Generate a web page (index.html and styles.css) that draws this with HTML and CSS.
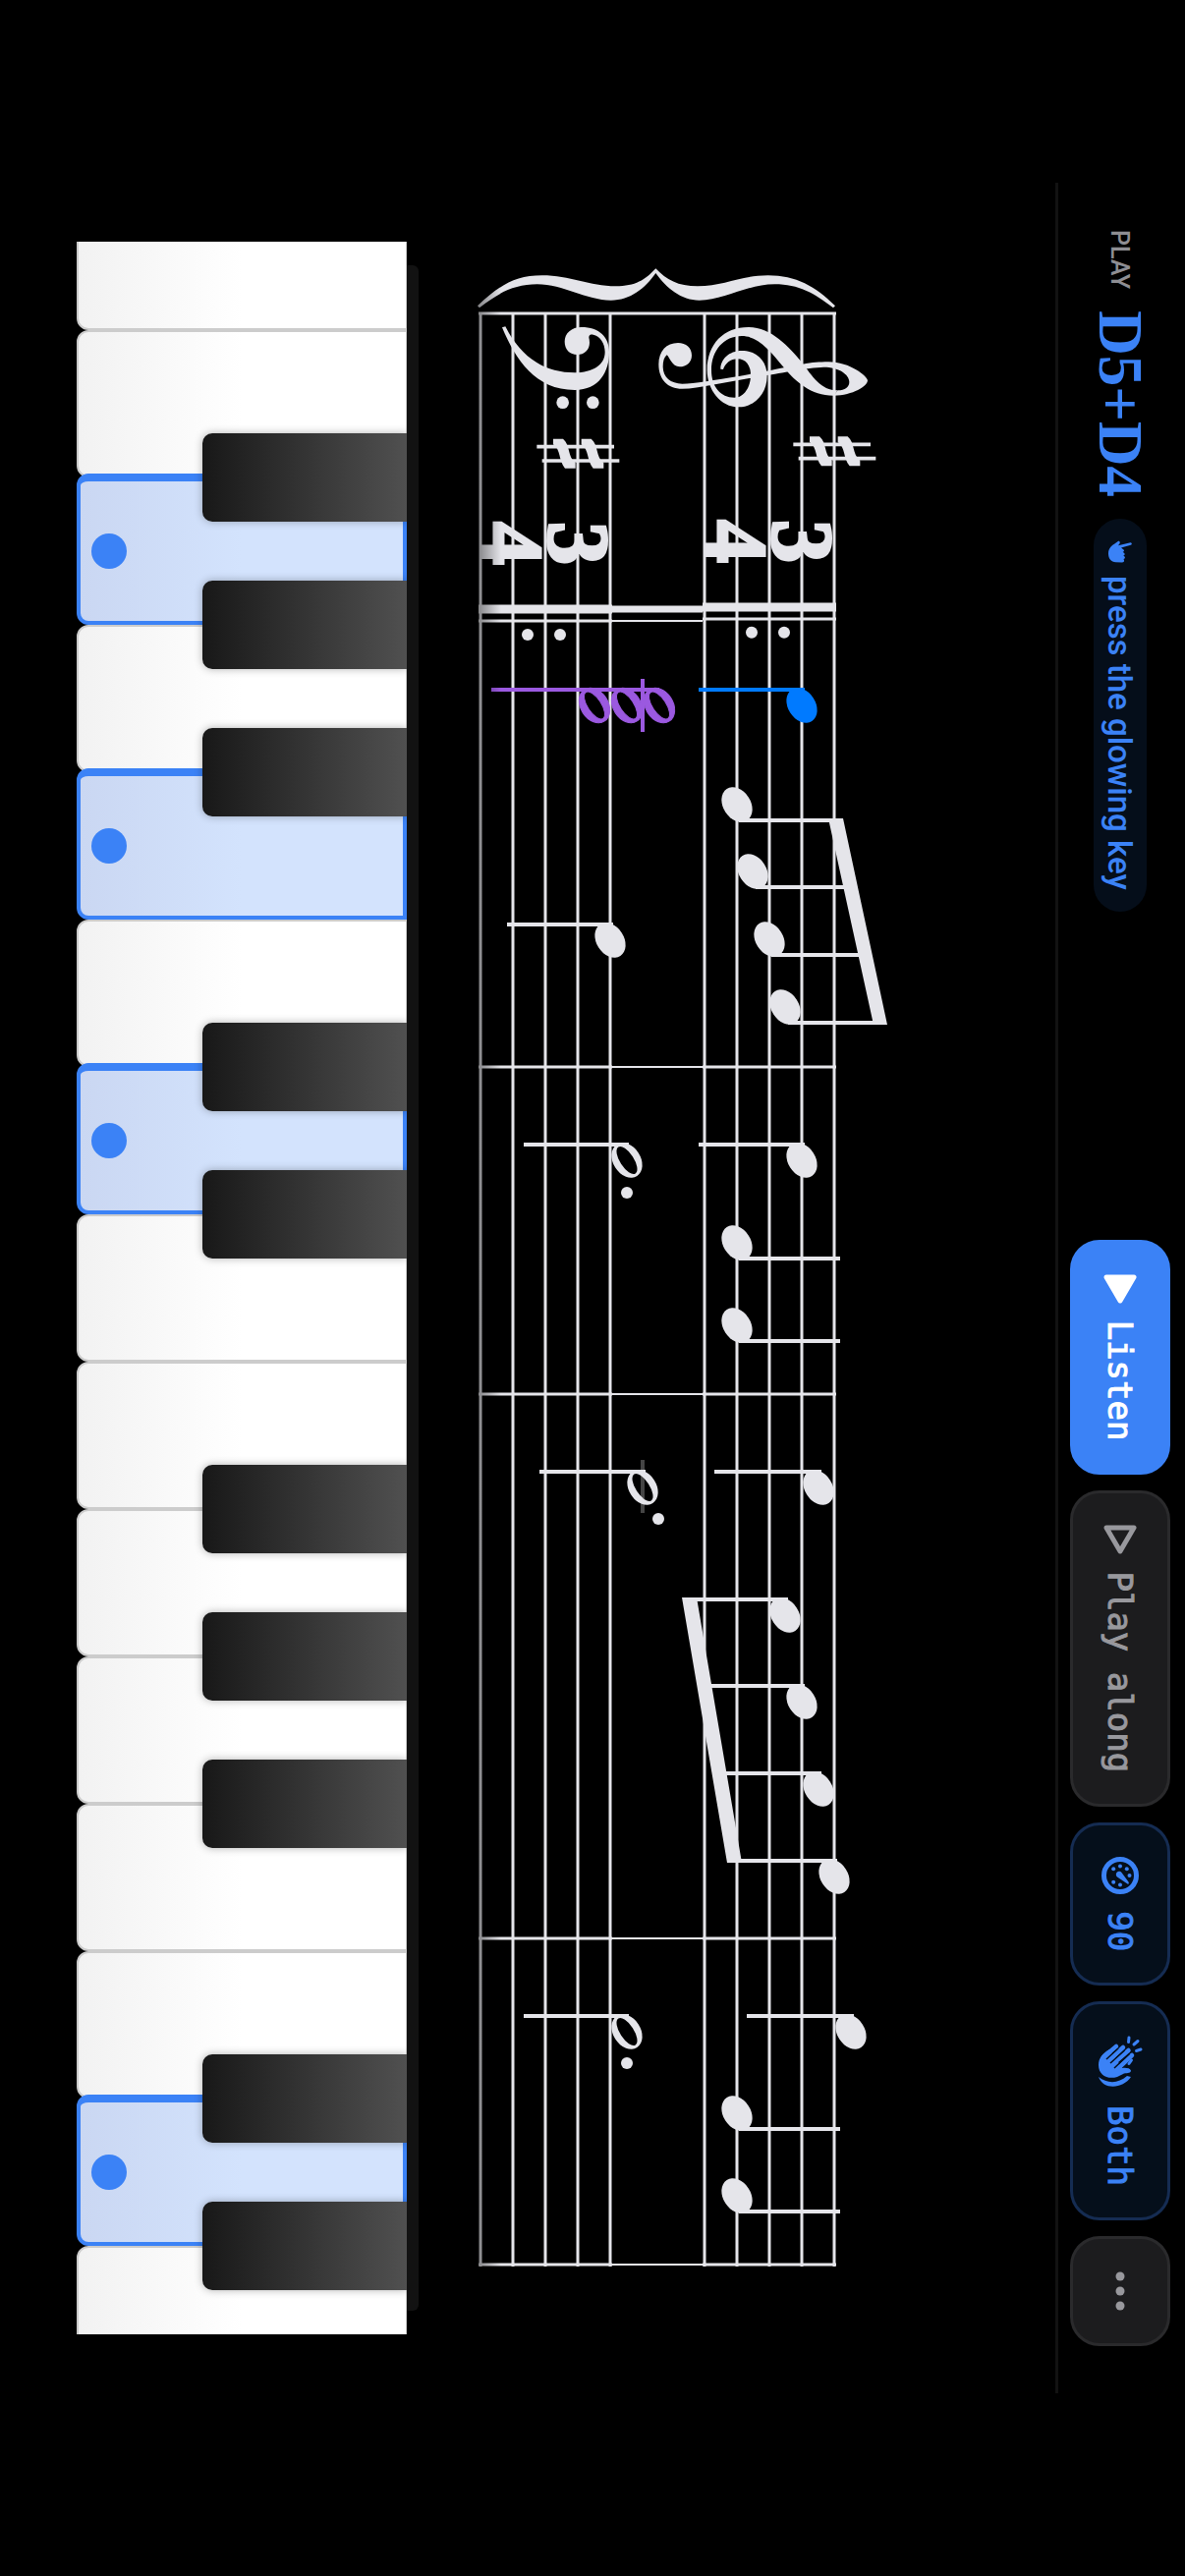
FILE: index.html
```html
<!DOCTYPE html>
<html lang="en">
<head>
<meta charset="utf-8">
<meta name="viewport" content="width=device-width, initial-scale=1">
<title>Piano practice</title>
<link rel="stylesheet" href="styles.css">
</head>
<body>
<main class="stage">
  <header class="toolbar">
    <div class="prompt">
      <span class="prompt-label">PLAY</span>
      <strong class="prompt-notes">D5+D4</strong>
      <span class="hint">
        <svg class="icon-hand" viewBox="0 0 24 24" aria-hidden="true"><path d="M2.200 1.500C2.500-.2 4.300-.3 4.700 1.200L7.500 11L9.500 8.500C10.400 7.600 11.700 8 11.800 9.300L13.200 7.600C14.200 7 15.300 7.500 15.300 8.800L16.800 7.300C17.800 6.700 18.900 7.300 18.900 8.500L20.300 8C21.600 7.700 22.400 8.600 22.400 10L22.300 16.500C22 21 18.500 24 13.500 24C9 24 6 21.500 3.800 18L1 14.200C.4 13 1.800 11.600 3.200 12.500L5.300 14Z"/></svg>
        <span>press the glowing key</span>
      </span>
    </div>
    <div class="actions">
      <button class="btn btn-primary" type="button">
        <svg class="icon-play" viewBox="0 0 30 34" aria-hidden="true"><path d="M3 3V31L27 17Z" fill="currentColor" stroke="currentColor" stroke-width="5" stroke-linejoin="round"/></svg>
        <span>Listen</span>
      </button>
      <button class="btn btn-muted" type="button">
        <svg class="icon-play" viewBox="0 0 30 34" aria-hidden="true"><path d="M3 3V31L27 17Z" fill="none" stroke="currentColor" stroke-width="5" stroke-linejoin="round"/></svg>
        <span>Play along</span>
      </button>
      <button class="btn btn-tint" type="button">
        <svg class="icon-gauge" viewBox="0 0 38 38" aria-hidden="true"><circle cx="19" cy="19" r="16.500" fill="none" stroke="currentColor" stroke-width="5"/><g fill="currentColor"><circle cx="19" cy="9.500" r="2"/><circle cx="12.200" cy="12.200" r="2"/><circle cx="9.500" cy="19" r="2"/><circle cx="12.200" cy="25.800" r="2"/><circle cx="25.800" cy="25.800" r="2"/><circle cx="28.500" cy="19" r="2"/><path d="M27.500 11.500L20.500 22A3.200 3.200 0 1 1 16 17.500L25.500 10.500C27 9.800 28.300 10.400 27.500 11.500Z"/></g></svg>
        <span>90</span>
      </button>
      <button class="btn btn-tint" type="button">
        <svg class="icon-clap" viewBox="0 0 54 46" aria-hidden="true"><g fill="none" stroke="currentColor" stroke-linecap="round"><path d="M2 14L6.500 14.500M5.500 5L9 9M14 2L15.500 6.500" stroke-width="3"/><path d="M11 27L22 40M12 20L27 36M15 14.500L31 33M20 11L36 28" stroke-width="4.500"/><path d="M25 11.500L28.500 14" stroke-width="3"/></g><path d="M14 34L22 28L33 21C32.500 17 33 13 35.500 12C38 12 38 15 38.500 19L42 26C45 36 40 45 30 45C23 45 18 41 14 34Z" fill="currentColor"/><path d="M42 12C54 20 56 40 42 45C49 36 49 25 41 16Z" fill="currentColor"/><path d="M13 25L24 37M15 18.500L28 33M18.500 13.500L33 29" stroke="#050f1b" stroke-width="1.500" fill="none"/></svg>
        <span>Both</span>
      </button>
      <button class="btn btn-muted" type="button" aria-label="More">
        <svg class="icon-more" viewBox="0 0 42 12" aria-hidden="true"><g fill="currentColor"><circle cx="6" cy="6" r="4.500"/><circle cx="21" cy="6" r="4.500"/><circle cx="36" cy="6" r="4.500"/></g></svg>
      </button>
    </div>
  </header>

  <section class="score" aria-label="Score">
    <svg class="score-sheet" viewBox="186 132 2250 648" role="img" aria-label="Piano score, three-four time">
      <defs>
        <ellipse id="solid" rx="19" ry="14" transform="rotate(-33)"/>
        <path id="hollow" fill-rule="evenodd" transform="rotate(-33)" d="M-19 0A19 14 0 1 1 19 0A19 14 0 1 1 -19 0ZM-16 0A16 7 0 1 0 16 0A16 7 0 1 0 -16 0Z"/>
        <g id="sharp">
          <path d="M1042 607H1278M1058 650H1294" stroke="#e5e5ea" stroke-width="11"/>
          <path id="sharp-bar" d="M1092 583H1122C1146 604 1134 636 1160 656V673H1128C1108 650 1116 616 1092 600Z"/>
          <use href="#sharp-bar" x="86"/>
        </g>
        <linearGradient id="fade" x1="0" y1="696" x2="0" y2="722" gradientUnits="userSpaceOnUse">
          <stop offset="0" stop-color="#fff"/><stop offset="1" stop-color="#888"/>
        </linearGradient>
        <mask id="edge" maskUnits="userSpaceOnUse" x="186" y="132" width="2250" height="648"><rect x="186" y="132" width="2250" height="648" fill="url(#fade)"/></mask>
      </defs>
      <g mask="url(#edge)" fill="#e5e5ea">
        <path class="line" d="M318 357H2307M318 390H2307M318 423H2307M318 456H2307M318 489H2307M318 585H2307M318 618H2307M318 651H2307M318 684H2307M318 717H2307"/>
        <path class="line" d="M319 355V719M1086 355V491M1086 583V719M1419 355V491M1419 583V719M1973 355V491M1973 583V719M2305 355V491M2305 583V719M630 355V491M632 583V719"/>
        <path class="thin" d="M1086 491V583M1419 491V583M1973 491V583M2305 491V583M632 491V583"/>
        <path class="bar" d="M618 355V491M620 583V719"/>
        <path class="bar-thin" d="M620 491V583"/>

        <g transform="matrix(0 -.33333 .33333 0 250 746)">
          <path d="M78 184C140 125 190 91 275 91C360 91 420 124 500 124C560 124 590 105 622 70C655 105 690 124 750 124C830 124 880 91 965 91C1050 91 1110 125 1170 184L1164 190C1105 145 1060 118 985 118C900 118 830 167 755 167C700 167 655 130 622 84C590 130 545 167 485 167C410 167 340 118 260 118C190 118 140 145 84 190Z"/>
          <path d="M153 250C195 350 255 441 375 441C450 441 480 385 480 325C480 280 450 249 395 249C365 249 344 268 344 293C344 317 360 333 382 333C405 333 420 317 420 296C420 285 418 283 418 279C419 272 425 271 431 272C452 276 467 298 467 325C467 365 430 388 375 388C290 388 215 350 163 247Z"/>
          <circle cx="338" cy="479" r="19"/><circle cx="430" cy="479" r="19"/>
          <path d="M820 377C820 348 845 321 885 321C930 321 962 352 962 398C962 450 925 493 875 493C820 493 779 440 779 380C779 300 830 249 905 249C975 249 1030 310 1068 356C1100 398 1125 442 1178 442L1165 458C1095 458 1050 415 1015 374C970 320 935 276 885 276C830 276 792 320 792 380C792 430 820 464 862 464C893 464 912 430 912 395C912 366 897 346 872 346C850 346 834 360 828 378Z"/>
          <path d="M1070 362C1100 357 1120 355 1150 355C1215 355 1269 400 1269 412C1269 428 1225 458 1165 458L1178 442C1200 442 1213 432 1213 416C1213 393 1180 371 1135 371C1085 373 1000 390 960 396L795 425C760 432 730 437 703 437C658 437 631 408 631 362C631 322 655 297 690 297C715 297 732 312 732 335C732 356 716 370 695 370C672 370 664 340 656 334C648 340 644 352 644 370C644 402 668 422 703 422C740 422 800 410 880 398C960 384 1020 370 1070 362Z"/>
          <use href="#sharp"/><use href="#sharp" x="-783" y="7"/>
          <circle cx="915" cy="1181" r="18"/><circle cx="1014" cy="1181" r="18"/>
          <circle cx="231" cy="1188" r="18"/><circle cx="330" cy="1188" r="18"/>
        </g>

        <g class="meter"><text x="551" y="419">3</text><text x="551" y="486">4</text><text x="553" y="647">3</text><text x="553" y="714">4</text></g>

        <path class="stem" d="M835 454V350M903 437V336M972 421V320M1041 404V306M1165 387V495M1281 454V351M1365 454V351M1498 370V479M1628 404V510M1716 387V490M1805 370V474M1894 354V464M2052 337V446M2167 454V351M2251 454V351"/>
        <path d="M833 348L1043 303V317L833 363ZM1626 497L1896 451V466L1626 512Z"/>
        <g>
          <use href="#solid" x="819" y="456"/><use href="#solid" x="887" y="440"/><use href="#solid" x="956" y="423"/><use href="#solid" x="1025" y="407"/>
          <use href="#solid" x="1181" y="390"/><use href="#solid" x="1265" y="456"/><use href="#solid" x="1349" y="456"/>
          <use href="#solid" x="1514" y="373"/><use href="#solid" x="1644" y="407"/><use href="#solid" x="1732" y="390"/><use href="#solid" x="1821" y="373"/><use href="#solid" x="1910" y="357"/>
          <use href="#solid" x="2068" y="340"/><use href="#solid" x="2151" y="456"/><use href="#solid" x="2235" y="456"/>
        </g>
        <path class="ledger" d="M1486 552H1540"/>
        <path class="stem" d="M941 582V690M1165 566V673M1498 549V657M2052 566V673"/>
        <use href="#solid" x="957" y="585"/>
        <use href="#hollow" x="1181" y="568"/><circle cx="1214" cy="568" r="6"/>
        <use href="#hollow" x="1514" y="552"/><circle cx="1546" cy="536" r="6"/>
        <use href="#hollow" x="2068" y="568"/><circle cx="2100" cy="568" r="6"/>

        <g class="now-right"><path d="M702 387V495"/><use href="#solid" x="718" y="390"/></g>
        <g class="now-left"><path d="M702 535V706M691 552H745"/><use href="#hollow" x="718" y="601"/><use href="#hollow" x="718" y="568"/><use href="#hollow" x="718" y="535"/></g>
      </g>
    </svg>
  </section>

  <section class="keyboard" aria-label="Keyboard">
    <div class="felt"></div>
    <div class="keybed">
      <div class="keys">
        <button class="key" type="button" aria-label="E3"></button>
        <button class="key" type="button" aria-label="F3"><span class="sharp"></span></button>
        <button class="key lit" type="button" aria-label="G3"><span class="sharp"></span></button>
        <button class="key" type="button" aria-label="A3"><span class="sharp"></span></button>
        <button class="key lit" type="button" aria-label="B3"></button>
        <button class="key" type="button" aria-label="C4"><span class="sharp"></span></button>
        <button class="key lit" type="button" aria-label="D4"><span class="sharp"></span></button>
        <button class="key" type="button" aria-label="E4"></button>
        <button class="key" type="button" aria-label="F4"><span class="sharp"></span></button>
        <button class="key" type="button" aria-label="G4"><span class="sharp"></span></button>
        <button class="key" type="button" aria-label="A4"><span class="sharp"></span></button>
        <button class="key" type="button" aria-label="B4"></button>
        <button class="key" type="button" aria-label="C5"><span class="sharp"></span></button>
        <button class="key lit" type="button" aria-label="D5"><span class="sharp"></span></button>
        <button class="key" type="button" aria-label="E5"></button>
      </div>
    </div>
  </section>
</main>
</body>
</html>
```
FILE: styles.css
```css
:root {
  --blue: #3b82f6;
  --ink: #e5e5ea;
}

* { box-sizing: border-box; }

html, body { height: 100%; }

body {
  margin: 0;
  overflow: hidden;
  background: #000;
  font-family: Roboto, "Liberation Sans", sans-serif;
}

/* The player is always laid out in landscape; a portrait window shows it turned. */
.stage {
  display: flex;
  flex-direction: column;
  width: 100vw;
  height: 100vh;
  padding: 0 186px 78px;
}

@media (orientation: portrait) {
  .stage {
    position: absolute;
    top: 0;
    left: 100%;
    width: 100vh;
    height: 100vw;
    transform: rotate(90deg);
    transform-origin: top left;
  }
}

.toolbar {
  display: flex;
  align-items: center;
  justify-content: space-between;
  padding: 15px 48px 12px;
  border-bottom: 3px solid #121212;
}

.prompt, .actions, .hint, .btn { display: flex; align-items: center; }

.prompt { gap: 22px; }

.prompt-label {
  color: #8e8e93;
  font-size: 25px;
  font-weight: 500;
}

.prompt-notes {
  color: var(--blue);
  font: bold 63px/64px "Liberation Serif", serif;
}

.hint {
  gap: 12px;
  height: 54px;
  padding: 0 22px;
  border-radius: 27px;
  background: #050e1a;
  color: var(--blue);
  font-size: 33px;
  font-weight: 500;
}

.icon-hand { width: 24px; height: 24px; fill: currentColor; }
.icon-play { width: 30px; height: 34px; }
.icon-gauge { width: 38px; height: 38px; }
.icon-clap { width: 54px; height: 46px; }
.icon-more { width: 42px; height: 12px; }

.actions { gap: 16px; }

.btn {
  gap: 17px;
  height: 102px;
  padding: 0 32px;
  border: 3px solid transparent;
  border-radius: 30px;
  font: 34px/40px "DejaVu Sans Mono", monospace;
  -webkit-text-stroke: 1px currentColor;
}

.btn-primary { border-color: var(--blue); background: var(--blue); color: #fff; }
.btn-muted { border-color: #2a2a2c; background: #1c1c1e; color: #98989d; }
.btn-tint { border-color: #152c52; background: #050f1b; color: var(--blue); }

.score { flex: 1; min-height: 0; }

.score-sheet { display: block; width: 100%; height: 100%; }
.line { fill: none; stroke: var(--ink); stroke-width: 3; }
.thin { fill: none; stroke: var(--ink); stroke-width: 2; }
.bar { fill: none; stroke: var(--ink); stroke-width: 9; }
.bar-thin { fill: none; stroke: var(--ink); stroke-width: 7; }
.stem { fill: none; stroke: var(--ink); stroke-width: 4; }
.ledger { stroke: #444; stroke-width: 4; }
.meter {
  font: bold 88px "Liberation Serif", serif;
  text-anchor: middle;
  stroke: var(--ink);
  stroke-width: 3;
}
.now-right { fill: #007aff; stroke: none; }
.now-right path { stroke: #007aff; stroke-width: 4; }
.now-left { fill: #9b59e0; }
.now-left path { stroke: #9b59e0; stroke-width: 4; }
.now-left use { stroke: #9b59e0; stroke-width: 1; }

.keyboard { padding: 0 60px; }

.felt {
  height: 12px;
  margin: 0 24px;
  border-radius: 6px 6px 0 0;
  background: #121212;
}

.keybed { overflow: hidden; }

/* The outermost keys run past both ends of the visible keyboard. */
.keys {
  display: grid;
  grid-template-columns: repeat(15, 1fr);
  height: 336px;
  margin: 0 -60px;
}

.key {
  position: relative;
  padding: 0;
  border: 2px solid #ccc;
  border-top-width: 1px;
  border-radius: 0 0 12px 12px;
  background: linear-gradient(to top, #f2f2f2, #fff 50%);
}

.lit {
  margin-left: -4px;
  border: 4px solid var(--blue);
  border-left-width: 8px;
  background: linear-gradient(to top, #cad7f2, #d3e3fd 50%);
}

.lit::after {
  content: "";
  position: absolute;
  bottom: 11px;
  left: calc(50% - 18px);
  width: 36px;
  height: 36px;
  border-radius: 50%;
  background: var(--blue);
}

.sharp {
  position: absolute;
  z-index: 1;
  top: -1px;
  right: -47px;
  width: 90px;
  height: 208px;
  border-radius: 0 0 10px 10px;
  background: linear-gradient(to top, #181818, #505050);
  box-shadow: 0 0 8px rgba(0, 0, 0, .3);
}

.lit .sharp { top: -4px; right: -49px; }
```
